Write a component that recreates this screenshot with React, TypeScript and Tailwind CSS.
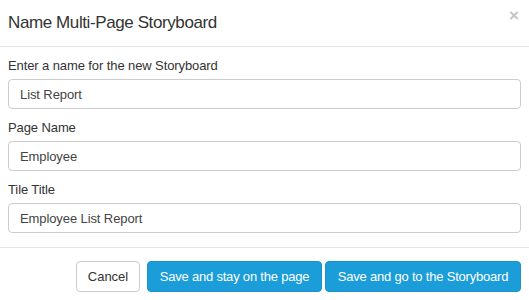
import { useState } from "react";

const fields = [
  { id: "storyboard", label: "Enter a name for the new Storyboard", value: "List Report" },
  { id: "page", label: "Page Name", value: "Employee" },
  { id: "tile", label: "Tile Title", value: "Employee List Report" },
];

function Field({ label, initial }: { label: string; initial: string }) {
  const [text, setText] = useState(initial);
  return (
    <label className="block">
      <span className="block h-[18px] text-[13px] leading-[18px] tracking-[-0.1px] text-[#333]">
        {label}
      </span>
      <input
        type="text"
        value={text}
        onChange={(e) => setText(e.target.value)}
        className="mt-[4px] block h-[30px] w-full rounded-[4px] border border-[#ccc] bg-white px-[11px] text-[13px] tracking-[-0.1px] text-[#444] outline-none focus:border-[#66afe9]"
      />
    </label>
  );
}

export default function App() {
  return (
    <div
      className="h-[300px] w-[529px] bg-white text-[#333]"
      style={{ fontFamily: '"Liberation Sans", Arial, sans-serif' }}
    >
      <div className="relative flex h-[47px] items-center border-b border-[#e5e5e5] px-[8px]">
        <h4 className="text-[17px] leading-[26px] tracking-[-0.4px] text-[#333]">
          Name Multi-Page Storyboard
        </h4>
        <button
          type="button"
          className="absolute right-[10px] top-[6px] text-[17px] font-bold leading-[20px] text-[#c4c4c4]"
        >
          ×
        </button>
      </div>
      <div className="flex flex-col gap-[10px] px-[8px] pt-[10px] pb-[14px]">
        {fields.map((f) => (
          <Field key={f.id} label={f.label} initial={f.value} />
        ))}
      </div>
      <div className="flex justify-end border-t border-[#e5e5e5] pt-[13px] pr-[8px]">
        <button
          type="button"
          className="h-[31px] w-[64px] rounded-[4px] border border-[#ccc] bg-white text-[13px] text-[#333]"
        >
          Cancel
        </button>
        <button
          type="button"
          className="ml-[7px] h-[31px] w-[175px] rounded-[4px] border border-[#1793c9] bg-[#1a9dd9] text-[13px] tracking-[-0.2px] text-white"
        >
          Save and stay on the page
        </button>
        <button
          type="button"
          className="ml-[3px] h-[31px] w-[196px] rounded-[4px] border border-[#1793c9] bg-[#1a9dd9] text-[13px] tracking-[-0.2px] text-white"
        >
          Save and go to the Storyboard
        </button>
      </div>
    </div>
  );
}
